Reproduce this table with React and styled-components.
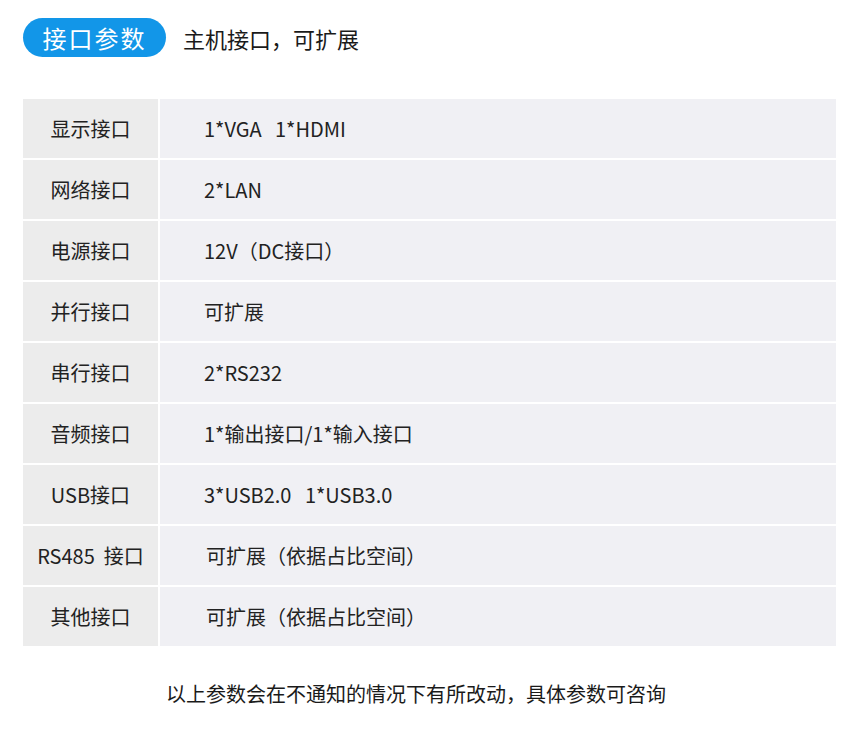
import React from "react";
import styled, { createGlobalStyle } from "styled-components";

const GlobalStyle = createGlobalStyle`
  body {
    margin: 0;
    background: #ffffff;
    font-family: "Noto Sans CJK SC", "Noto Sans", sans-serif;
    color: #222222;
  }
`;

const Page = styled.div`
  width: 860px;
  padding: 18px 23px 0 23px;
  box-sizing: border-box;
`;

const Header = styled.div`
  display: flex;
  align-items: center;
  gap: 17px;
  height: 39px;
`;

const Pill = styled.div`
  display: flex;
  align-items: center;
  justify-content: center;
  width: 143px;
  height: 39px;
  border-radius: 20px;
  background: #1296e8;
  color: #ffffff;
  font-size: 24px;
  letter-spacing: 2px;
`;

const Subtitle = styled.div`
  font-size: 22px;
  color: #1a1a1a;
`;

const Table = styled.div`
  margin-top: 42px;
  display: grid;
  grid-template-columns: 135px 1fr;
  grid-auto-rows: 59px;
  gap: 2px;
  width: 813px;
`;

const Label = styled.div`
  display: flex;
  align-items: center;
  justify-content: center;
  background: #ececec;
  font-size: 20px;
  color: #222222;
  white-space: pre;
`;

const Value = styled.div`
  display: flex;
  align-items: center;
  padding-left: ${(p) => p.$indent || 44}px;
  background: #f0f0f4;
  font-size: 20px;
  color: #222222;
  white-space: pre;
`;

const Note = styled.div`
  margin-top: 33px;
  padding-right: 28px;
  text-align: center;
  font-size: 20px;
  color: #1a1a1a;
`;

const rows = [
  ["显示接口", "1*VGA   1*HDMI"],
  ["网络接口", "2*LAN"],
  ["电源接口", "12V（DC接口）"],
  ["并行接口", "可扩展"],
  ["串行接口", "2*RS232"],
  ["音频接口", "1*输出接口/1*输入接口"],
  ["USB接口", "3*USB2.0   1*USB3.0"],
  ["RS485  接口", "可扩展（依据占比空间）", 46],
  ["其他接口", "可扩展（依据占比空间）", 46],
];

export default function App() {
  return (
    <Page>
      <GlobalStyle />
      <Header>
        <Pill>接口参数</Pill>
        <Subtitle>主机接口，可扩展</Subtitle>
      </Header>
      <Table>
        {rows.map(([label, value, indent]) => (
          <React.Fragment key={label}>
            <Label>{label}</Label>
            <Value $indent={indent}>{value}</Value>
          </React.Fragment>
        ))}
      </Table>
      <Note>以上参数会在不通知的情况下有所改动，具体参数可咨询</Note>
    </Page>
  );
}
